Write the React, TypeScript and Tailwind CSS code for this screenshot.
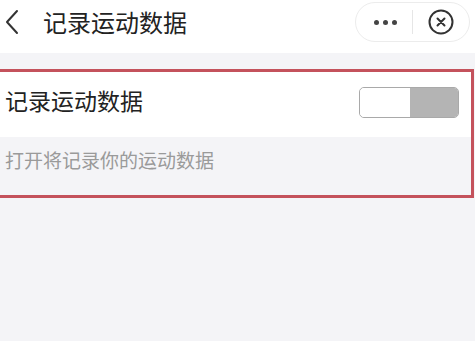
export default function App() {
  return (
    <div
      className="h-[341px] w-[475px] overflow-hidden bg-[#f4f4f7]"
      style={{ fontFamily: '"Noto Sans CJK SC", "Noto Sans", sans-serif' }}
    >
      {/* Navigation bar */}
      <header className="flex h-[53px] items-center bg-white pb-[9px]">
        <svg width="16" height="26" viewBox="0 0 16 26" className="ml-[4px]">
          <path d="M13 2 L3 13 L13 24" fill="none" stroke="#333" strokeWidth="2" strokeLinecap="round" strokeLinejoin="round" />
        </svg>
        <h1 className="ml-[23px] text-[24px] leading-none text-[#222]">记录运动数据</h1>
        <div className="ml-auto mr-[5px] flex h-[40px] w-[115px] items-center rounded-full border border-[#ececec] bg-white">
          <div className="flex w-[56px] items-center justify-center gap-[4px] pl-[2px]">
            <span className="h-[5px] w-[5px] rounded-full bg-[#444]" />
            <span className="h-[5px] w-[5px] rounded-full bg-[#444]" />
            <span className="h-[5px] w-[5px] rounded-full bg-[#444]" />
          </div>
          <div className="h-[24px] w-px bg-[#e6e6e6]" />
          <div className="flex flex-1 items-center justify-center">
            <svg width="26" height="26" viewBox="0 0 26 26">
              <circle cx="13" cy="13" r="11.5" fill="none" stroke="#333" strokeWidth="2" />
              <path d="M9.5 9.5 L16.5 16.5 M16.5 9.5 L9.5 16.5" stroke="#333" strokeWidth="2" strokeLinecap="round" />
            </svg>
          </div>
        </div>
      </header>

      {/* Highlighted setting */}
      <section className="mr-[1px] mt-[16px] border-y-[3px] border-r-[3px] border-l-0 border-[#c4525c]">
        <div className="flex h-[65px] items-center bg-white pb-[5px] pl-[5px] pr-[12px]">
          <span className="mb-[3px] text-[23px] leading-none text-[#222]">记录运动数据</span>
          <div className="ml-auto flex h-[31px] w-[100px] overflow-hidden rounded-[5px] border border-[#a9a9a9]">
            <div className="w-[50px] rounded-[4px] bg-white" />
            <div className="flex-1 bg-[#b4b4b4]" />
          </div>
        </div>
        <div className="flex h-[58px] items-center bg-[#f4f4f7] pb-[14px] pl-[5px]">
          <span className="text-[19px] leading-none text-[#9a9a9a]">打开将记录你的运动数据</span>
        </div>
      </section>
    </div>
  );
}
